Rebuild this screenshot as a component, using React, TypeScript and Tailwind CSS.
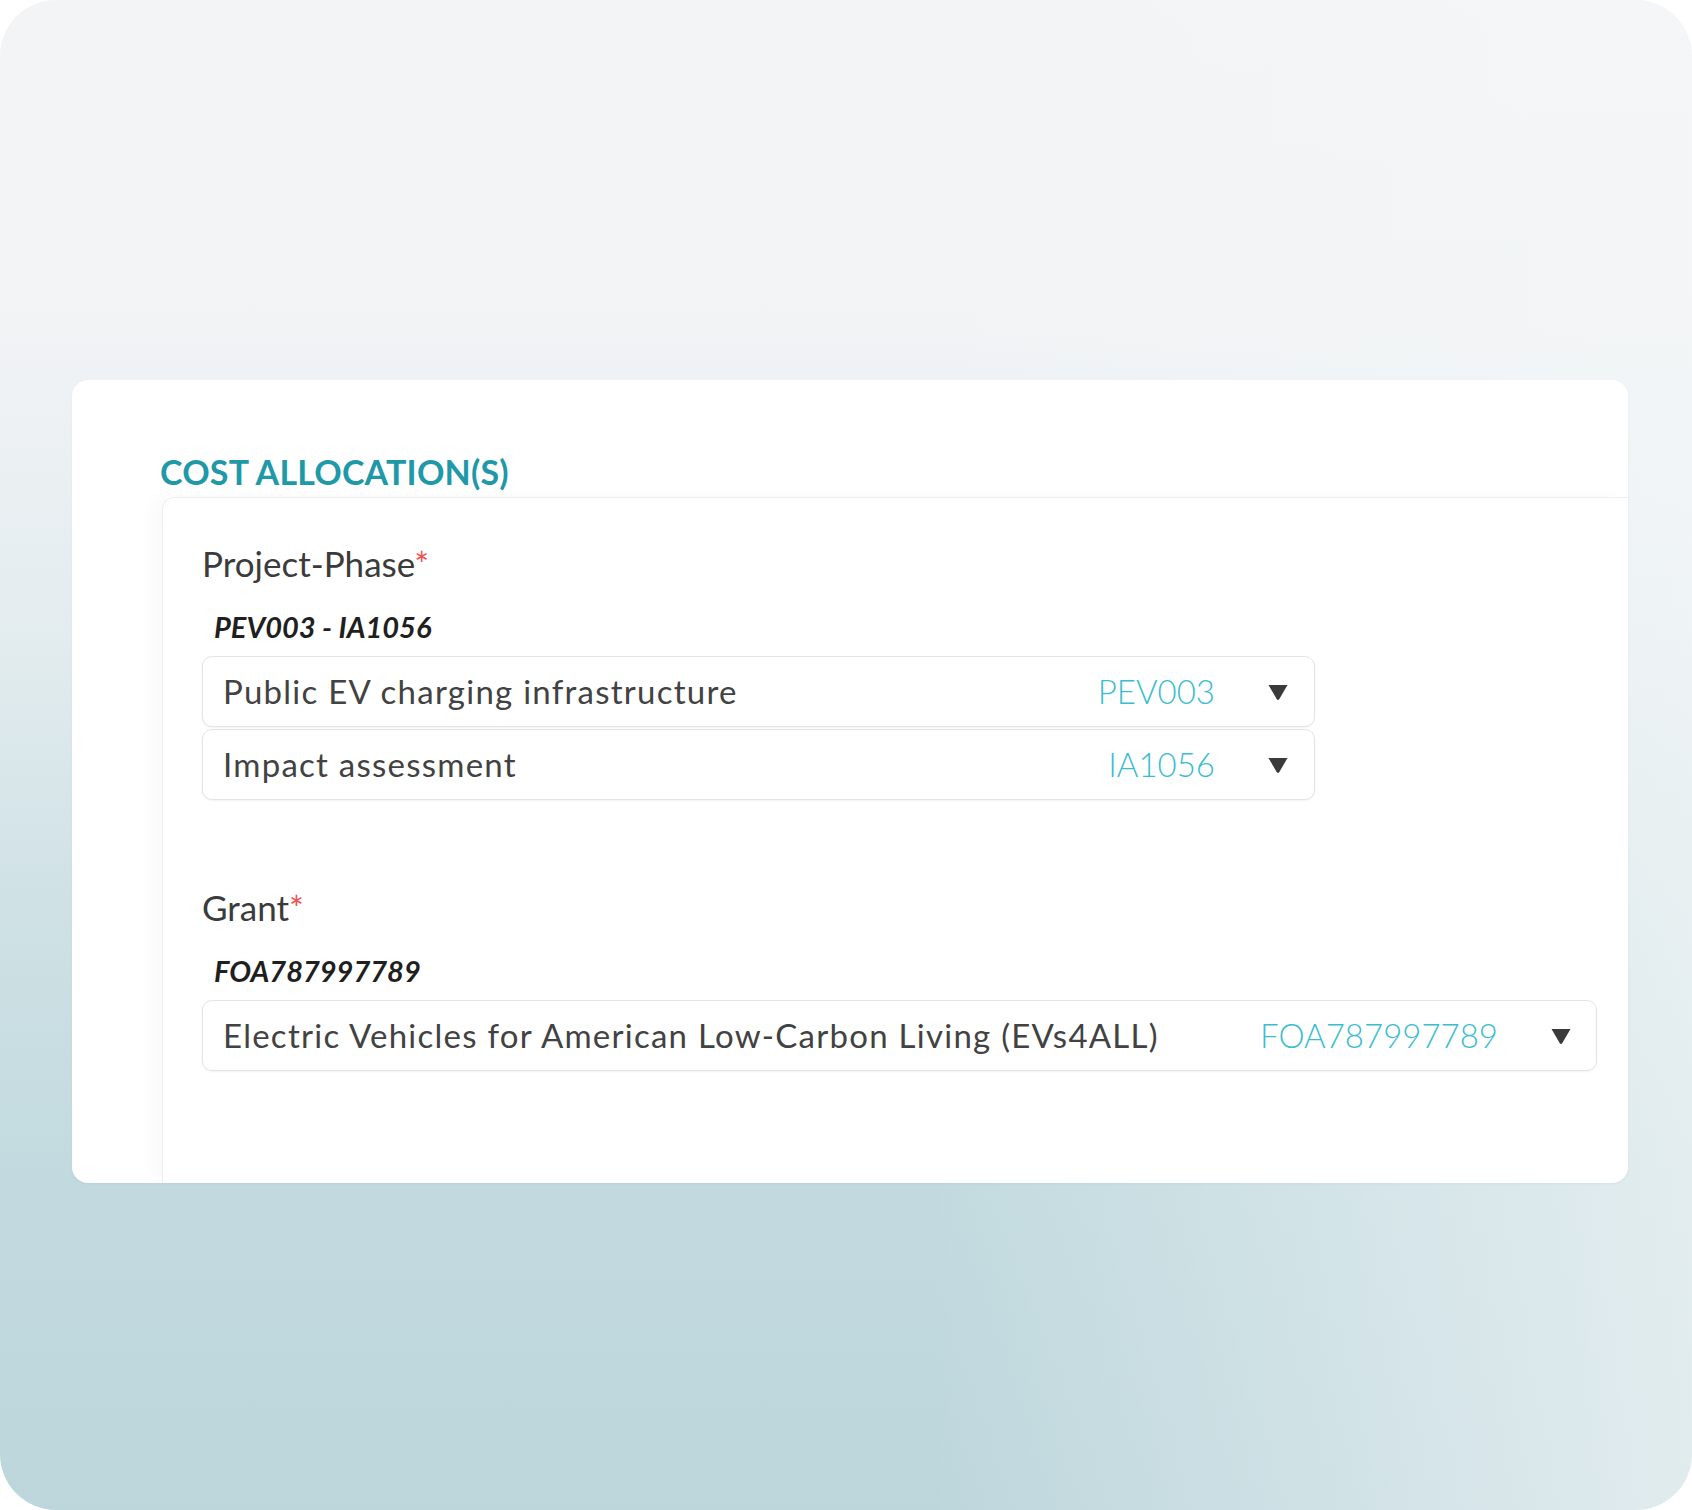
import React from "react";

type Option = {
  label: string;
  code: string;
};

const font = { fontFamily: "Lato, 'Open Sans', sans-serif" };

function Caret() {
  return (
    <svg width="22" height="18" viewBox="0 0 22 18" className="shrink-0">
      <path d="M1.5 2 H20.5 L12.2 16.2 Q11 17.6 9.8 16.2 Z" fill="#3a3a3a" />
    </svg>
  );
}

function SelectBox({ option, wide }: { option: Option; wide?: boolean }) {
  return (
    <div
      className={
        wide
          ? "w-[1395px] h-[71px] flex items-center pl-[20px] pr-[24px] bg-white border border-[#e3e4e5] rounded-[10px] shadow-[0_1px_2px_rgba(0,0,0,0.05)]"
          : "w-[1113px] h-[71px] flex items-center pl-[20px] pr-[25px] bg-white border border-[#e3e4e5] rounded-[10px] shadow-[0_1px_2px_rgba(0,0,0,0.05)]"
      }
    >
      <span className="flex-1 whitespace-nowrap text-[33px] leading-[1.25] tracking-[1.25px] text-[#424242]">
        {option.label}
      </span>
      <span className="whitespace-nowrap text-[33px] leading-[1.25] font-light text-[#3bbdd0] mr-[52px]">
        {option.code}
      </span>
      <Caret />
    </div>
  );
}

function FieldLabel({ text }: { text: string }) {
  return (
    <div className="text-[35px] leading-[42px] text-[#3b3b3b]">
      {text}
      <span className="text-[#ef5350]">*</span>
    </div>
  );
}

function Summary({ text }: { text: string }) {
  return (
    <div className="mt-[25px] mb-[12px] pl-[12px] text-[29px] leading-[35px] italic font-bold text-[#1f1f1f]">
      {text}
    </div>
  );
}

export default function App() {
  return (
    <div className="w-[1692px] h-[1510px] bg-white" style={font}>
      <div className="w-full h-full rounded-[56px] overflow-hidden pt-[380px] pl-[72px] bg-[linear-gradient(90deg,rgba(255,255,255,0)_55%,rgba(244,247,248,0.65)_100%),linear-gradient(180deg,#f3f4f6_0%,#f1f3f5_22%,#e3ecef_42%,#cfe1e5_60%,#c2dadf_78%,#bdd6dc_100%)]">
        <div className="w-[1556px] h-[803px] bg-white rounded-[16px] overflow-hidden flex flex-col pl-[88px] pt-[71px] shadow-[0_1px_3px_rgba(0,0,0,0.04)]">
          <h2 className="text-[34px] leading-[41px] font-bold text-[#1f98a8] tracking-[0.2px]">
            COST ALLOCATION(S)
          </h2>
          <div className="flex-1 mt-[5px] ml-[2px] border-l border-t border-[#eceef0] rounded-tl-[12px] pl-[39px] pt-[44px] shadow-[-10px_0_18px_rgba(0,0,0,0.025)]">
            <FieldLabel text="Project-Phase" />
            <Summary text="PEV003 - IA1056" />
            <div className="flex flex-col gap-[2px]">
              <SelectBox option={{ label: "Public EV charging infrastructure", code: "PEV003" }} />
              <SelectBox option={{ label: "Impact assessment", code: "IA1056" }} />
            </div>

            <div className="mt-[86px]">
              <FieldLabel text="Grant" />
              <Summary text="FOA787997789" />
              <SelectBox
                wide
                option={{ label: "Electric Vehicles for American Low-Carbon Living (EVs4ALL)", code: "FOA787997789" }}
              />
            </div>
          </div>
        </div>
      </div>
    </div>
  );
}
